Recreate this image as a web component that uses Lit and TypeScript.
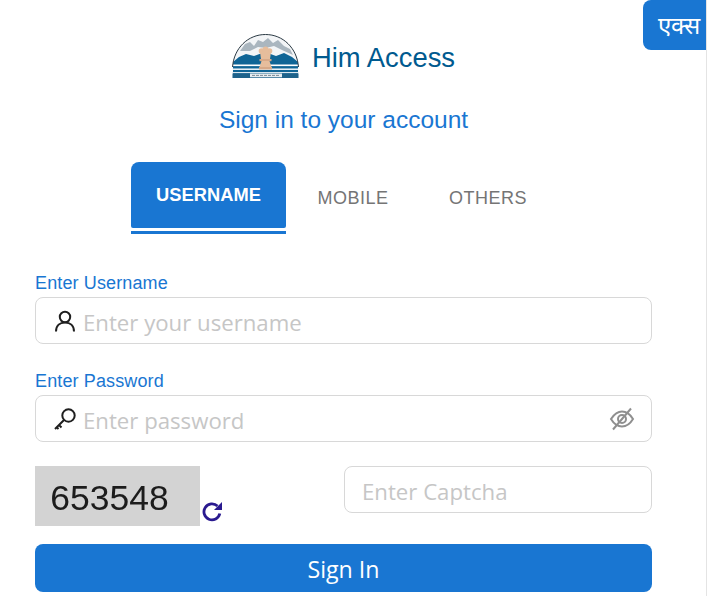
import { LitElement, html, css, svg } from "lit";
import { customElement } from "lit/decorators.js";

@customElement("app-root")
export class AppRoot extends LitElement {
  static styles = css`
    :host { display: block; width: 707px; height: 596px; overflow: hidden; background: #fff; position: relative; box-sizing: border-box; border-right: 1px solid #e4e4e4; font-family: "Liberation Sans", Arial, sans-serif; }
    .lang { position: absolute; top: 0; right: -1px; width: 64px; height: 50px; box-sizing: border-box; background: #1976d2; color: #fff; border-radius: 8px 0 0 8px; font-family: "Liberation Serif", "DejaVu Serif", serif; font-size: 24px; display: flex; align-items: center; justify-content: flex-end; padding: 0 7px 2px 0; }
    .wrap { width: 617px; margin-left: 35px; display: flex; flex-direction: column; }
    .brand { display: flex; align-items: center; justify-content: center; gap: 13px; height: 44px; margin-top: 34px; }
    .brand svg { display: block; }
    .brand span { font-size: 27.4px; color: #005a8f; position: relative; top: 2px; }
    .sub { text-align: center; color: #1976d2; font-size: 24.5px; line-height: 28px; margin-top: 28px; }
    .tabs { display: flex; margin-top: 28px; margin-left: 96px; height: 72px; }
    .tab { font-size: 18px; letter-spacing: 0.5px; color: #757575; display: flex; align-items: center; justify-content: center; height: 66px; padding-top: 7px; box-sizing: border-box; }
    .tab.on { width: 155px; background: #1976d2; color: #fff; font-weight: 700; font-size: 18.3px; letter-spacing: 0.03px; border-radius: 8px 8px 2px 2px; padding-top: 0; position: relative; }
    .tab.on::after { content: ""; position: absolute; left: 0; right: 0; top: 69px; height: 3px; background: #1976d2; }
    .tab.m { margin-left: 32px; width: 70px; }
    .tab.o { margin-left: 61px; width: 78px; }
    .label { color: #1976d2; font-size: 18px; line-height: 21px; letter-spacing: 0.13px; }
    .l1 { margin-top: 39px; }
    .l2 { margin-top: 27px; }
    .field { margin-top: 3px; height: 47px; box-sizing: border-box; border: 1px solid #d8d8d8; border-radius: 8px; display: flex; align-items: center; padding: 0 16px 0 17px; font-family: "Open Sans", sans-serif; font-size: 22.2px; color: #c6c6c6; }
    .field svg { flex: none; }
    .field span { margin-left: 6px; flex: 1; padding-top: 3px; }
    .row { display: flex; margin-top: 24px; height: 60px; align-items: flex-start; }
    .captcha { width: 165px; height: 60px; background: #d3d3d3; color: #1c1c1c; font-size: 35.5px; display: flex; align-items: center; justify-content: center; }
    .captcha b { font-weight: 400; filter: blur(0.5px); padding: 4px 16px 0 0; }
    .refresh { margin: 34px 0 0 1px; flex: none; }
    .cinput { margin-top: 0; margin-left: auto; width: 308px; padding-left: 17px; font-size: 22.2px; }
    .cinput span { margin-left: 0; }
    .btn { margin-top: 18px; height: 48px; background: #1976d2; color: #fff; border-radius: 8px; display: flex; align-items: center; justify-content: center; font-family: "Open Sans", sans-serif; font-size: 23.2px; padding-top: 1px; box-sizing: border-box; }
  `;

  logo() {
    return svg`<svg width="67" height="44" viewBox="0 0 67 44">
      <defs><clipPath id="a"><path d="M0.5 44 V33 C2 14 16 0.5 33.5 0.5 C51 0.5 65 14 66.5 33 V44 Z"/></clipPath></defs>
      <g clip-path="url(#a)">
        <rect width="67" height="44" fill="#f3f5f7"/>
        <path d="M8 17 L13 10 L18 8 L22 12 L26 6 L31 8 L36 4 L41 9 L46 6 L52 12 L58 15 L61 21 L50 16 L42 12 L34 14 L26 13 L18 17 Z" fill="#aab6bf"/>
        <path d="M1 28 L7 23 L14 20 L22 22 L33 18 L44 22 L52 19 L60 23 L66 28 V44 H1 Z" fill="#0f6596"/>
        <rect y="30.500" width="67" height="1.6" fill="#fff"/>
        <rect y="34.500" width="67" height="1.400" fill="#fff"/>
        <rect y="38" width="67" height="1.200" fill="#dbe7ef"/>
        <rect y="39.500" width="67" height="4.500" fill="#1e628a"/>
      </g>
      <path d="M0.5 33 C2 14 16 0.5 33.5 0.5 C51 0.5 65 14 66.5 33" fill="none" stroke="#2b3a44" stroke-width="1"/>
      <g fill="#e6bd9c">
        <circle cx="29.500" cy="17" r="2.800"/><circle cx="37.500" cy="17" r="2.800"/><circle cx="33.500" cy="15.500" r="3"/>
        <path d="M28 18 H39 L38 25 H29 Z"/>
        <rect x="27.500" y="25" width="12" height="2.200" fill="#d7a988"/>
        <path d="M29.500 27 H37.500 L39.500 33 H27.500 Z"/>
        <rect x="27" y="33" width="13" height="2.500" fill="#d7a988"/>
      </g>
      <rect x="18" y="39.500" width="32" height="3.800" fill="#e6ecf0"/>
      <path d="M20 41.400 H48" stroke="#7b8a94" stroke-width="1" stroke-dasharray="3 1"/>
    </svg>`;
  }

  render() {
    return html`
      <div class="lang">एक्स</div>
      <div class="wrap">
        <div class="brand">${this.logo()}<span>Him Access</span></div>
        <div class="sub">Sign in to your account</div>
        <div class="tabs">
          <div class="tab on">USERNAME</div>
          <div class="tab m">MOBILE</div>
          <div class="tab o">OTHERS</div>
        </div>
        <div class="label l1">Enter Username</div>
        <div class="field">
          <svg width="24" height="24" viewBox="0 0 24 24" fill="none" stroke="#1f1f1f" stroke-width="2"><circle cx="12" cy="8" r="5.2"/><path d="M3 22.500 C3 16.500 7 13.500 12 13.500 C17 13.500 21 16.500 21 22.500"/></svg>
          <span>Enter your username</span>
        </div>
        <div class="label l2">Enter Password</div>
        <div class="field">
          <svg width="24" height="24" viewBox="0 0 24 24" fill="none" stroke="#1f1f1f" stroke-width="2"><circle cx="15.500" cy="8.500" r="6.200"/><path d="M11 13 L2 22 M6 18 L8.500 20.500 M3.500 20 L5.500 22"/></svg>
          <span>Enter password</span>
          <svg width="26" height="24" viewBox="0 0 26 24" fill="none" stroke="#8f8f8f" stroke-width="2"><path d="M2 12 C6 6 9 4.500 13 4.500 C17 4.500 21 7 24 12 C21 17 17 19.500 13 19.500 C9 19.500 5 17 2 12 Z"/><circle cx="13" cy="12" r="4"/><path d="M22 1.500 L4 22.500"/></svg>
        </div>
        <div class="row">
          <div class="captcha"><b>653548</b></div>
          <svg class="refresh" width="22" height="22" viewBox="0 0 22 22" fill="none"><path d="M18.800 13.500 A8 8 0 1 1 16.500 6" stroke="#2a1a8f" stroke-width="2.800"/><path d="M21 2 V10 H13 Z" fill="#2a1a8f"/></svg>
          <div class="field cinput"><span>Enter Captcha</span></div>
        </div>
        <div class="btn">Sign In</div>
      </div>
    `;
  }
}
